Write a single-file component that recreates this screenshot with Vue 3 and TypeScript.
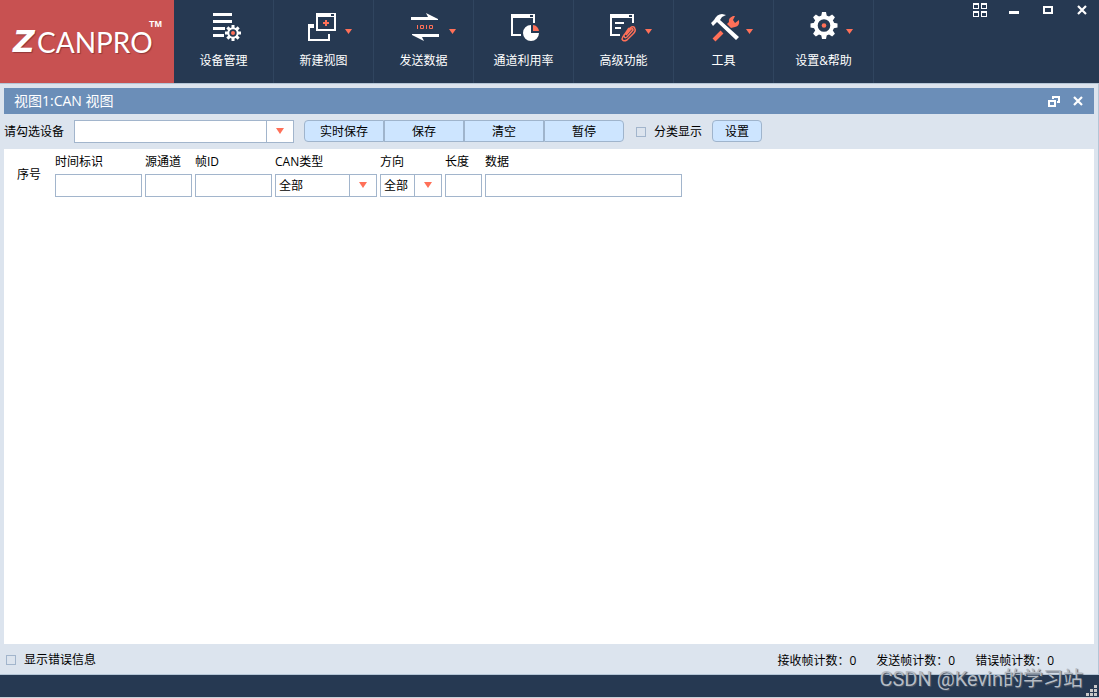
<script setup lang="ts">
import { ref } from 'vue'

interface MenuItem {
  id: string
  label: string
  caret: number | null
}

interface Field {
  id: string
  label: string
  size: string
  options?: string[]
}

const menu: MenuItem[] = [
  { id: 'device', label: '设备管理', caret: null },
  { id: 'view', label: '新建视图', caret: 53 },
  { id: 'send', label: '发送数据', caret: 57 },
  { id: 'usage', label: '通道利用率', caret: null },
  { id: 'advanced', label: '高级功能', caret: 53 },
  { id: 'tools', label: '工具', caret: 54 },
  { id: 'settings', label: '设置&帮助', caret: 54 },
]

const actions = ['实时保存', '保存', '清空', '暂停']

const fields: Field[] = [
  { id: 'time', label: '时间标识', size: 'w-time' },
  { id: 'channel', label: '源通道', size: 'w-channel' },
  { id: 'frame', label: '帧ID', size: 'w-frame' },
  { id: 'type', label: 'CAN类型', size: 'w-type', options: ['全部', 'CAN', 'CANFD'] },
  { id: 'direction', label: '方向', size: 'w-direction', options: ['全部', '接收', '发送'] },
  { id: 'length', label: '长度', size: 'w-length' },
  { id: 'data', label: '数据', size: 'w-data' },
]

const counters = [
  { label: '接收帧计数', value: 0 },
  { label: '发送帧计数', value: 0 },
  { label: '错误帧计数', value: 0 },
]

const teeth = [0, 45, 90, 135, 180, 225, 270, 315]
const grouped = ref(false)
const showErrors = ref(false)
</script>

<template>
  <div class="app">
    <header class="header">
      <div class="brand">
        <span class="brand-z">Z</span><span class="brand-name">CANPRO</span><span class="brand-tm">TM</span>
      </div>
      <nav class="menu">
        <button v-for="item in menu" :key="item.id" class="menu-item" type="button">
          <svg class="menu-icon" viewBox="-4 0 72 32" aria-hidden="true">
            <g v-if="item.id === 'device'">
              <path class="w" d="M21 3h19v3H21zM21 10h19v3H21zM21 17h12v3H21zM21 24h11v3H21z" />
              <circle class="d" cx="41" cy="23" r="8" />
              <rect v-for="a in teeth" :key="a" class="w" x="39.5" y="15" width="3" height="4" :transform="`rotate(${a} 41 23)`" />
              <circle class="ws" cx="41" cy="23" r="4.7" stroke-width="2" />
              <circle class="o" cx="41" cy="23" r="2" />
            </g>
            <g v-else-if="item.id === 'view'">
              <path class="w" d="M16 14h6v4h-4v11h18v-5h2v7H16z" />
              <path class="w" fill-rule="evenodd" d="M24 3h20v18H24zM26 7v12h16V7zM39 4v2h3V4z" />
              <path class="o" d="M33 10h2v2h2v2h-2v2h-2v-2h-2v-2h2z" />
            </g>
            <g v-else-if="item.id === 'send'">
              <path class="w" d="M19 7h17l-2-4 12 6v1H19zM47 27H30l2 4-12-6v-1h27z" />
              <path class="o" d="M25 15h1v4h-1zM34 15h1v4h-1z" />
              <path class="os" d="M28.500 15.500h3v3h-3zM37.500 15.500h3v3h-3z" />
            </g>
            <g v-else-if="item.id === 'usage'">
              <path class="w" d="M19 4h24v9h-2V8H21v16h8v2H19z" />
              <path class="d" d="M38 5h3v2h-3z" />
              <path class="w" d="M39 15a8 8 0 1 0 8 8h-8z" />
              <path class="o" d="M41 15a6.500 6.500 0 0 1 6 6h-6z" />
            </g>
            <g v-else-if="item.id === 'advanced'">
              <path class="w" d="M18 4h24v9h-2V8H20v16h8v2H18zM23 12h9v2h-9zM23 17h6v2h-6z" />
              <path class="d" d="M37 5h3v2h-3z" />
              <path class="os clip" d="M34 25l5-6q2-1 2 1l-6 7q-3 2-3-2l6-7q4-3 5 1q1 2-2 5l-6 6q-4 2-5-1q0-2 3-5l4-6" />
            </g>
            <g v-else-if="item.id === 'tools'">
              <path class="os" stroke-width="4" d="M22 30l8-8" />
              <path class="o" d="M35 14l2-2q-1-4 4-6l2 0-2 4 2 3 4-3q1 6-4 7l-4 1z" />
              <path class="w" d="M19 13l3-3q3-6 8-6l4 1-4 2-2 3L47 27l-3 3L25 12l-4 4z" />
            </g>
            <g v-else>
              <path v-for="a in teeth" :key="a" class="w" d="M29 7l1-5h4l1 5z" :transform="`rotate(${a} 32 15.500)`" />
              <circle class="ws" cx="32" cy="15.500" r="8.300" stroke-width="4" />
              <circle class="o" cx="32" cy="15.500" r="2.300" />
            </g>
            <path v-if="item.caret !== null" class="o" :d="`M${item.caret} 19h7l-3.500 5z`" />
          </svg>
          <span class="menu-label">{{ item.label }}</span>
        </button>
      </nav>
      <div class="window-controls">
        <button type="button" aria-label="布局">
          <svg width="14" height="14" viewBox="0 0 14 14"><path class="w" fill-rule="evenodd" d="M0 0h6v6H0zM1 2v3h4V2zM8 0h6v6H8zM9 2v3h4V2zM0 8h6v6H0zM1 10v3h4v-3zM8 8h6v6H8zM9 10v3h4v-3z" /></svg>
        </button>
        <button type="button" aria-label="最小化">
          <svg width="10" height="8" viewBox="0 0 10 8"><path class="w" d="M0 5h10v3H0z" /></svg>
        </button>
        <button type="button" aria-label="最大化">
          <svg width="10" height="8" viewBox="0 0 10 8"><path class="w" fill-rule="evenodd" d="M0 0h10v8H0zM2 2v4h6V2z" /></svg>
        </button>
        <button type="button" aria-label="关闭">
          <svg width="10" height="8" viewBox="0 0 10 8"><path class="ws" stroke-width="2.200" d="M1 0l8 8M9 0L1 8" /></svg>
        </button>
      </div>
    </header>

    <main class="panel">
      <div class="title-bar">
        <h1>视图1:CAN 视图</h1>
        <div class="title-actions">
          <button type="button" aria-label="还原">
            <svg width="12" height="11" viewBox="0 0 12 11"><path class="w" fill-rule="evenodd" d="M4 0h8v7H9V5h1V2H6v1H4zM0 4h8v7H0zM2 6v3h4V6z" /></svg>
          </button>
          <button type="button" aria-label="关闭视图">
            <svg width="10" height="8" viewBox="0 0 10 8"><path class="ws" stroke-width="2.200" d="M1 0l8 8M9 0L1 8" /></svg>
          </button>
        </div>
      </div>

      <div class="toolbar">
        <label class="device-label" for="device">请勾选设备</label>
        <span class="drop w-device"><select id="device"><option></option></select></span>
        <div class="segmented">
          <button v-for="a in actions" :key="a" type="button">{{ a }}</button>
        </div>
        <label class="check grouped"><input v-model="grouped" type="checkbox" />分类显示</label>
        <button class="config" type="button">设置</button>
      </div>

      <section class="frames">
        <div class="filters">
          <span class="index">序号</span>
          <div v-for="f in fields" :key="f.id" class="field" :class="f.size">
            <label :for="f.id">{{ f.label }}</label>
            <span v-if="f.options" class="drop">
              <select :id="f.id"><option v-for="o in f.options" :key="o">{{ o }}</option></select>
            </span>
            <input v-else :id="f.id" type="text" />
          </div>
        </div>
      </section>

      <div class="status">
        <label class="check"><input v-model="showErrors" type="checkbox" />显示错误信息</label>
        <div class="counters">
          <span v-for="c in counters" :key="c.label">{{ c.label }}：{{ c.value }}</span>
        </div>
      </div>
    </main>

    <footer class="footer">
      <span class="watermark">CSDN @Kevin的学习站</span>
      <svg class="grip" width="11" height="11" viewBox="0 0 11 11" aria-hidden="true">
        <path d="M8 0h3v3H8zM4 4h3v3H4zM8 4h3v3H8zM0 8h3v3H0zM4 8h3v3H4zM8 8h3v3H8z" />
      </svg>
    </footer>
  </div>
</template>

<style>
body {
  margin: 0;
}
</style>

<style scoped>
.app {
  display: flex;
  flex-direction: column;
  min-height: 100vh;
  background: #dce4ee;
  color: #000;
  font: 12px/16px "Open Sans", "Noto Sans CJK SC", sans-serif;
}
.app *,
.app {
  box-sizing: border-box;
}
button,
input,
select {
  margin: 0;
  padding: 0;
  border: 0;
  border-radius: 0;
  background: none;
  color: inherit;
  font: inherit;
}
.w {
  fill: #fff;
}
.d {
  fill: #263952;
}
.o {
  fill: #ff7058;
}
.ws {
  fill: none;
  stroke: #fff;
}
.os {
  fill: none;
  stroke: #ff7058;
}
.clip {
  stroke-width: 1.5;
}
.header {
  display: flex;
  height: 84px;
  border-bottom: 1px solid #b4c5d6;
  background: #263952;
  color: #fff;
}
.brand {
  position: relative;
  display: flex;
  width: 174px;
  padding: 20px 0 0 13px;
  background: #c85151;
  text-shadow: 1px 1px 1px #8f3838;
  font-family: Lato, sans-serif;
  font-size: 28px;
  line-height: 44px;
}
.brand-z {
  width: 24px;
  font-family: "DejaVu Sans", sans-serif;
  font-size: 30px;
  font-style: italic;
  font-weight: 700;
}
.brand-tm {
  position: absolute;
  top: 19px;
  right: 12px;
  font: 700 9px/10px "Liberation Sans", sans-serif;
  text-shadow: none;
}
.menu {
  display: flex;
}
.menu-item {
  display: flex;
  flex-direction: column;
  align-items: center;
  width: 100px;
  padding: 10px 0 0;
  border-right: 1px solid #30455f;
}
.menu-icon {
  width: 72px;
  height: 32px;
}
.menu-label {
  margin-top: 11px;
}
.window-controls {
  display: flex;
  height: 20px;
  margin-left: auto;
}
.window-controls button,
.title-actions button {
  display: flex;
  align-items: center;
  justify-content: center;
}
.window-controls button {
  width: 34px;
}
.window-controls svg,
.title-actions svg {
  overflow: visible;
}
.panel {
  display: flex;
  flex: 1;
  flex-direction: column;
  padding: 4px 4px 0;
  border-right: 1px solid #b4c5d6;
  border-bottom: 1px solid #b4c5d6;
}
.title-bar {
  display: flex;
  align-items: center;
  justify-content: space-between;
  height: 26px;
  padding: 0 4px 0 10px;
  background: #6b8eb8;
  color: #fff;
}
h1 {
  margin: 0;
  font-size: 14px;
  font-weight: 400;
  line-height: 28px;
}
.title-actions {
  display: flex;
}
.title-actions button {
  width: 24px;
  height: 24px;
}
.toolbar {
  display: flex;
  align-items: flex-start;
  height: 35px;
  padding-top: 6px;
  line-height: 24px;
}
.device-label {
  width: 70px;
}
.drop {
  position: relative;
  display: flex;
  height: 23px;
}
.drop::before {
  position: absolute;
  top: 0;
  right: 27px;
  bottom: 0;
  width: 1px;
  background: #a2b5cc;
  content: "";
  pointer-events: none;
}
.drop::after {
  position: absolute;
  top: 8px;
  right: 10px;
  border: solid transparent;
  border-width: 6px 4px 0;
  border-top-color: #ff7058;
  content: "";
  pointer-events: none;
}
select,
input[type="text"] {
  width: 100%;
  height: 23px;
  padding: 0 3px;
  border: 1px solid #a2b5cc;
  background: #fff;
  appearance: none;
}
.w-device {
  width: 220px;
}
.segmented {
  display: flex;
  margin-left: 10px;
}
.segmented button,
.config {
  height: 22px;
  padding-top: 2px;
  border: 1px solid #9fb4cc;
  background: #cde5ff;
  line-height: 16px;
}
.segmented button {
  width: 80px;
}
.segmented button:first-child {
  border-radius: 4px 0 0 4px;
}
.segmented button:last-child {
  border-radius: 0 4px 4px 0;
}
.config {
  width: 50px;
  margin-left: 10px;
  border-radius: 4px;
}
.check {
  display: flex;
  align-items: center;
  gap: 8px;
}
.grouped {
  margin-left: 12px;
}
input[type="checkbox"] {
  width: 10px;
  height: 10px;
  border: 1px solid #a2b5cc;
  appearance: none;
}
input[type="checkbox"]:checked {
  background: #6b8eb8;
}
.frames {
  flex: 1;
  background: #fff;
}
.filters {
  display: flex;
  gap: 3px;
  padding-top: 5px;
}
.index {
  width: 48px;
  padding: 13px 0 0 13px;
}
.field label {
  display: block;
  height: 20px;
}
.w-time {
  width: 87px;
}
.w-channel {
  width: 47px;
}
.w-frame {
  width: 77px;
}
.w-type {
  width: 102px;
}
.w-direction {
  width: 62px;
}
.w-length {
  width: 37px;
}
.w-data {
  width: 197px;
}
.status {
  display: flex;
  align-items: center;
  justify-content: space-between;
  height: 30px;
  padding: 2px 40px 0 2px;
}
.counters {
  display: flex;
  gap: 20px;
  padding-top: 2px;
}
.footer {
  position: relative;
  height: 23px;
  border-bottom: 1px solid #c9d0d8;
  background: #263952;
}
.watermark {
  position: absolute;
  right: 16px;
  bottom: 6px;
  color: #b4bbc4;
  font: 20px/24px Roboto, "Noto Sans CJK SC", sans-serif;
  text-shadow: 1px 1px 1px #4b5563;
}
.grip {
  position: absolute;
  right: 2px;
  bottom: 1px;
  fill: #c8c8c8;
}
</style>
